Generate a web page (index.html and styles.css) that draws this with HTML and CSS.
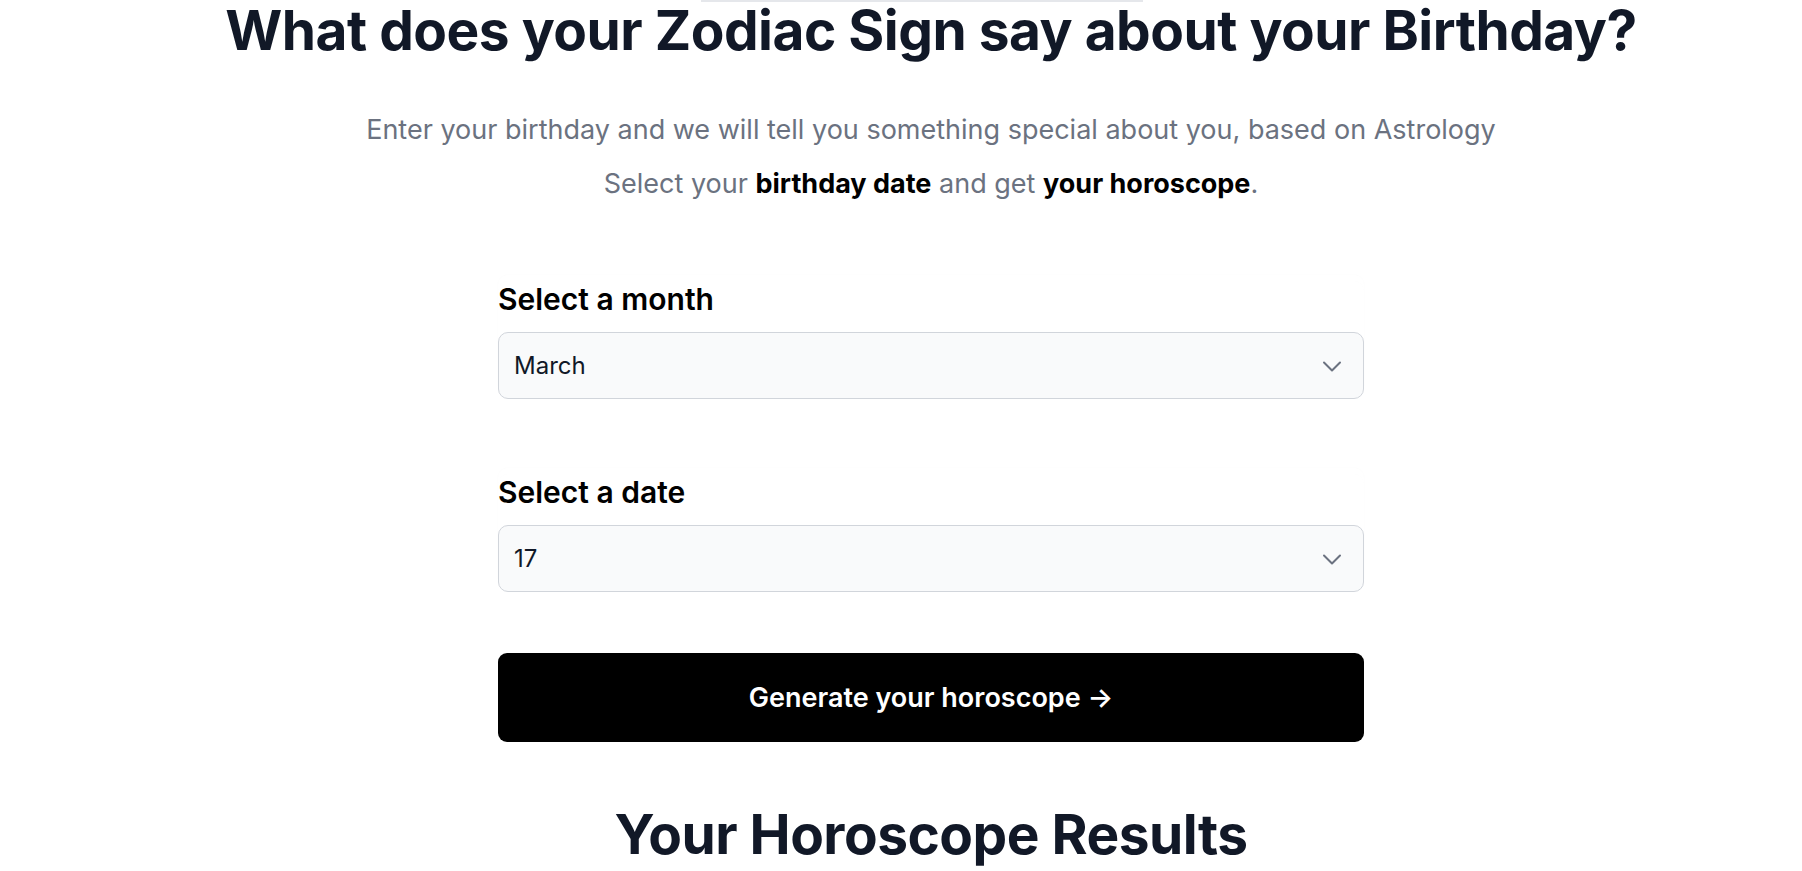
FILE: index.html
```html
<!DOCTYPE html>
<html lang="en">
<head>
<meta charset="utf-8">
<title>Zodiac Birthday</title>
<link rel="stylesheet" href="styles.css">
</head>
<body>
<main class="page">
  <div class="top-edge"></div>
  <h1 class="title">What does your Zodiac Sign say about your Birthday?</h1>
  <p class="lead lead-first">Enter your birthday and we will tell you something special about you, based on Astrology</p>
  <p class="lead lead-second">Select your <strong>birthday date</strong> and get <strong>your horoscope</strong>.</p>
  <form class="form">
    <div class="field">
      <label class="label">Select a month</label>
      <div class="select">
        <span class="select-value">March</span>
        <svg class="chevron" width="20" height="20" viewBox="0 0 20 20" fill="none" stroke="#6b7280" stroke-width="2" stroke-linecap="round" stroke-linejoin="round"><path d="M2 6.5l8 8 8-8"/></svg>
      </div>
    </div>
    <div class="field field-second">
      <label class="label">Select a date</label>
      <div class="select">
        <span class="select-value">17</span>
        <svg class="chevron" width="20" height="20" viewBox="0 0 20 20" fill="none" stroke="#6b7280" stroke-width="2" stroke-linecap="round" stroke-linejoin="round"><path d="M2 6.5l8 8 8-8"/></svg>
      </div>
    </div>
    <button type="button" class="button">Generate your horoscope →</button>
  </form>
  <h2 class="results">Your Horoscope Results</h2>
</main>
</body>
</html>
```

FILE: styles.css
```css
html, body {
  margin: 0;
  padding: 0;
  background: #ffffff;
}
body {
  font-family: Inter, "Noto Sans", "Liberation Sans", sans-serif;
  color: #111827;
}
.page {
  display: flex;
  flex-direction: column;
  align-items: center;
  padding-left: 60px;
  height: 871px;
  overflow: hidden;
  box-sizing: border-box;
}
.top-edge {
  width: 442px;
  height: 2px;
  background: #e5e7eb;
  margin-right: 18px;
  flex-shrink: 0;
}
.title {
  margin: -2px 0 0 0;
  font-size: 55px;
  line-height: 60px;
  font-weight: 700;
  letter-spacing: -0.5px;
  color: #111827;
  white-space: nowrap;
}
.lead {
  margin: 0;
  font-size: 27px;
  line-height: 32px;
  color: #6b7280;
  white-space: nowrap;
}
.lead strong {
  color: #000000;
  font-weight: 700;
}
.lead-first {
  margin-top: 54px;
}
.lead-second {
  margin-top: 22px;
}
.form {
  width: 866px;
  margin-top: 81px;
  display: flex;
  flex-direction: column;
}
.field {
  display: flex;
  flex-direction: column;
  gap: 15px;
  border-radius: 10px;
  box-shadow: 0 -6px 0 0 #ffffff, 0 -6px 3px 0 rgba(0, 0, 0, 0.02);
}
.field-second {
  margin-top: 75px;
}
.label {
  font-size: 30px;
  line-height: 36px;
  font-weight: 600;
  color: #000000;
}
.select {
  height: 67px;
  box-sizing: border-box;
  border: 1px solid #d1d5db;
  border-radius: 10px;
  background: #f9fafb;
  display: flex;
  align-items: center;
  justify-content: space-between;
  padding: 0 21px 0 15px;
}
.select-value {
  font-size: 24px;
  color: #111827;
}
.chevron {
  display: block;
}
.button {
  margin-top: 61px;
  height: 89px;
  border: none;
  border-radius: 9px;
  background: #000000;
  color: #ffffff;
  font-family: Inter, "Noto Sans", "Liberation Sans", sans-serif;
  font-size: 27px;
  font-weight: 600;
  cursor: pointer;
}
.results {
  margin: 62px 0 0 0;
  font-size: 55px;
  line-height: 60px;
  font-weight: 700;
  letter-spacing: -0.5px;
  color: #111827;
  white-space: nowrap;
}
```
